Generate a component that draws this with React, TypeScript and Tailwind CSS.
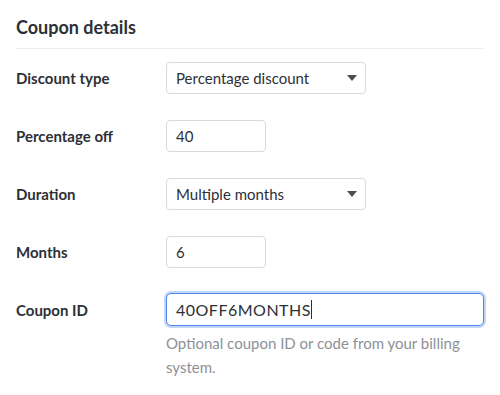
import React from "react";

function Caret() {
  return (
    <svg width="10" height="6" viewBox="0 0 10 6" className="shrink-0">
      <path d="M0 0 L10 0 L5 6 Z" fill="#4a4d52" />
    </svg>
  );
}

function Row({ label, children }: { label: string; children: React.ReactNode }) {
  return (
    <div className="flex items-start">
      <div className="w-[150px] h-[32px] flex items-center text-[15px] font-bold text-[#2d3036]">{label}</div>
      <div className="flex-1">{children}</div>
    </div>
  );
}

function Select({ value }: { value: string }) {
  return (
    <div className="w-[200px] h-[32px] border border-[#d8dadd] rounded-[4px] bg-white flex items-center justify-between pl-[9px] pr-[8px] text-[15px] text-[#2d3036]">
      <span>{value}</span>
      <Caret />
    </div>
  );
}

function Input({ value }: { value: string }) {
  return (
    <div className="w-[100px] h-[32px] border border-[#d8dadd] rounded-[4px] bg-white flex items-center pl-[9px] text-[15px] text-[#2d3036]">
      {value}
    </div>
  );
}

export default function App() {
  return (
    <div className="w-[500px] h-[395px] bg-white px-[16px] pt-[14px]" style={{ fontFamily: '"Source Sans Pro", Lato, "Noto Sans", sans-serif' }}>
      <div className="text-[18px] font-bold text-[#2d3036] leading-[26px]">Coupon details</div>
      <div className="h-px bg-[#eceef0] mt-[8px] mb-[13px]" />
      <div className="flex flex-col gap-[26px]">
        <Row label="Discount type"><Select value="Percentage discount" /></Row>
        <Row label="Percentage off"><Input value="40" /></Row>
        <Row label="Duration"><Select value="Multiple months" /></Row>
        <Row label="Months"><Input value="6" /></Row>
        <Row label="Coupon ID">
          <div className="h-[33px] -mt-[1px] border border-[#4f86e8] rounded-[5px] bg-white flex items-center pl-[9px] text-[16px] tracking-[0.5px] text-[#2d3036] ring-[2px] ring-[#c2d6f8]">
            <span>40OFF6MONTHS</span>
            <span className="inline-block w-px h-[19px] bg-[#2d3036]" />
          </div>
          <div className="mt-[5px] text-[15px] leading-[24px] text-[#8d9197]">
            Optional coupon ID or code from your billing system.
          </div>
        </Row>
      </div>
    </div>
  );
}
